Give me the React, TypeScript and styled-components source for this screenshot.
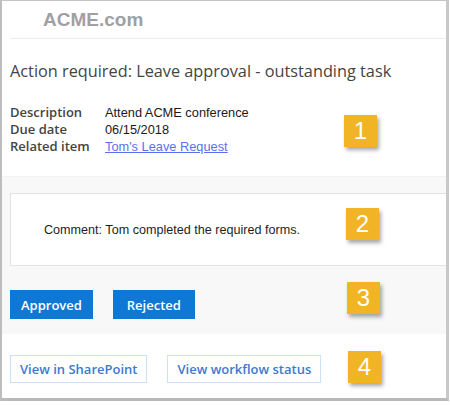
import React from 'react'
import styled, { createGlobalStyle } from 'styled-components'

const GlobalStyle = createGlobalStyle`
  html, body {
    margin: 0;
    padding: 0;
    background: #ffffff;
  }
`

const Card = styled.div`
  position: relative;
  box-sizing: border-box;
  width: 449px;
  height: 401px;
  border-left: 2px solid #bdbdbd;
  border-top: 1px solid #c4c4c4;
  border-right: 3px solid #c9c9c9;
  border-bottom: 3px solid #b9b9b9;
  display: flex;
  flex-direction: column;
  background: #fff;
  overflow: hidden;
  font-family: 'Liberation Sans', Arial, sans-serif;
`

const Header = styled.div`
  height: 37px;
  margin-left: 8px;
  padding-left: 33px;
  border-bottom: 1px solid #ededed;
  display: flex;
  align-items: center;
  font-size: 19px;
  font-weight: bold;
  color: #a0a0a0;
`

const Title = styled.h1`
  margin: 21px 0 0 8px;
  font-family: 'Open Sans', sans-serif;
  font-size: 16.3px;
  font-weight: 400;
  color: #444;
  line-height: 22px;
`

const Details = styled.dl`
  margin: 22px 0 0 8px;
  display: grid;
  grid-template-columns: 95px auto;
  line-height: 17px;
`

const Label = styled.dt`
  font-family: 'Open Sans', sans-serif;
  font-size: 13px;
  font-weight: 600;
  color: #444;
`

const Value = styled.dd`
  margin: 0;
  font-size: 12.8px;
  color: #1a1a1a;
`

const Link = styled.a`
  color: #5a6ff0;
  text-decoration: underline;
`

const GraySection = styled.div`
  margin-top: 21px;
  background: #f8f8f8;
  padding: 16px 0 15px 8px;
  border-top: 1px solid #f2f2f2;
`

const CommentBox = styled.div`
  height: 71px;
  background: #fff;
  border: 1px solid #e2e2e2;
  border-right: none;
  padding-left: 33px;
  display: flex;
  align-items: center;
  font-size: 12.6px;
  color: #1e1e1e;
`

const Row = styled.div<{ $top: number }>`
  display: flex;
  gap: 20px;
  margin-top: ${(p) => p.$top}px;
`

const Button = styled.button<{ $variant: 'primary' | 'outline' }>`
  height: ${(p) => (p.$variant === 'primary' ? 29 : 28)}px;
  min-width: ${(p) => (p.$variant === 'primary' ? '82px' : '0')};
  box-sizing: border-box;
  padding: 0 ${(p) => (p.$variant === 'primary' ? 10 : 9)}px;
  font-family: 'Open Sans', sans-serif;
  font-size: 13px;
  font-weight: 600;
  cursor: pointer;
  background: ${(p) => (p.$variant === 'primary' ? '#0f78d4' : '#ffffff')};
  color: ${(p) => (p.$variant === 'primary' ? '#ffffff' : '#3a7ad0')};
  border: 1px solid ${(p) => (p.$variant === 'primary' ? '#0f78d4' : '#c9e2f7')};
`

const Links = styled.div`
  padding-left: 8px;
`

const Badge = styled.div<{ $top: number; $left: number }>`
  position: absolute;
  top: ${(p) => p.$top}px;
  left: ${(p) => p.$left}px;
  width: 33px;
  height: 32px;
  background: #f0b424;
  color: #fff;
  font-family: 'Liberation Sans', Arial, sans-serif;
  font-size: 24px;
  display: flex;
  align-items: center;
  justify-content: center;
  box-shadow: 2px 3px 4px rgba(0, 0, 0, 0.35);
`

export default function App() {
  return (
    <>
      <GlobalStyle />
      <Card>
        <Header>ACME.com</Header>
        <Title>Action required: Leave approval - outstanding task</Title>
        <Details>
          <Label>Description</Label>
          <Value>Attend ACME conference</Value>
          <Label>Due date</Label>
          <Value>06/15/2018</Value>
          <Label>Related item</Label>
          <Value>
            <Link href="#">Tom's Leave Request</Link>
          </Value>
        </Details>
        <GraySection>
          <CommentBox>Comment: Tom completed the required forms.</CommentBox>
          <Row $top={24}>
            <Button $variant="primary">Approved</Button>
            <Button $variant="primary">Rejected</Button>
          </Row>
        </GraySection>
        <Links>
          <Row $top={21}>
            <Button $variant="outline">View in SharePoint</Button>
            <Button $variant="outline">View workflow status</Button>
          </Row>
        </Links>
        <Badge $top={114} $left={342}>1</Badge>
        <Badge $top={207} $left={344}>2</Badge>
        <Badge $top={281} $left={345}>3</Badge>
        <Badge $top={350} $left={346}>4</Badge>
      </Card>
    </>
  )
}
